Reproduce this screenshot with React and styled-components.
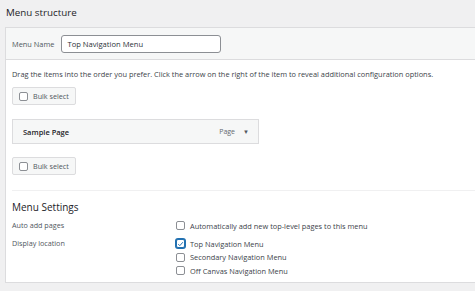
import React from 'react';
import styled, { createGlobalStyle } from 'styled-components';

const locations = [
  { label: 'Top Navigation Menu', checked: true },
  { label: 'Secondary Navigation Menu', checked: false },
  { label: 'Off Canvas Navigation Menu', checked: false },
];

const GlobalStyle = createGlobalStyle`
  html, body {
    margin: 0;
    padding: 0;
    background: #f0f0f1;
    overflow: hidden;
  }
  body {
    font-family: "Open Sans", "Noto Sans", sans-serif;
    color: #1d2327;
  }
`;

const Check = ({ checked }) => (
  <Box checked={checked}>
    {checked && (
      <svg width="8" height="8" viewBox="0 0 10 10">
        <path d="M1.8 5.2 L4 7.4 L8.4 2.4" fill="none" stroke="#2271b1" strokeWidth="1.4" />
      </svg>
    )}
  </Box>
);

const App = () => {
  return (
    <>
      <GlobalStyle />
      <Page>
        <Title>Menu structure</Title>
        <Panel>
          <Header>
            <Label>Menu Name</Label>
            <NameInput defaultValue="Top Navigation Menu" />
          </Header>
          <Body>
            <Hint>
              Drag the items into the order you prefer. Click the arrow on the right of the item to reveal additional configuration options.
            </Hint>
            <BulkButton>
              <Check />
              Bulk select
            </BulkButton>
            <MenuItem>
              <ItemTitle>Sample Page</ItemTitle>
              <ItemMeta>
                Page
                <Arrow>▼</Arrow>
              </ItemMeta>
            </MenuItem>
            <BulkButton>
              <Check />
              Bulk select
            </BulkButton>
            <Settings>
              <SettingsTitle>Menu Settings</SettingsTitle>
              <SettingRow>
                <SettingLabel>Auto add pages</SettingLabel>
                <Options>
                  <Option>
                    <Check />
                    Automatically add new top-level pages to this menu
                  </Option>
                </Options>
              </SettingRow>
              <SettingRow>
                <SettingLabel>Display location</SettingLabel>
                <Options>
                  {locations.map(loc => (
                    <Option key={loc.label}>
                      <Check checked={loc.checked} />
                      {loc.label}
                    </Option>
                  ))}
                </Options>
              </SettingRow>
            </Settings>
          </Body>
        </Panel>
      </Page>
    </>
  );
};

const Page = styled.div`
  width: 475px;
  height: 291px;
  overflow: hidden;
`

const Title = styled.h2`
  margin: 0;
  padding: 6px 0 0 6px;
  height: 21px;
  font-size: 9.8px;
  font-weight: 400;
  line-height: 14px;
  color: #1d2327;
`

const Panel = styled.div`
  margin-left: 5px;
  width: 490px;
  background: #fff;
  border: 1px solid #dcdcde;
  box-sizing: border-box;
`

const Header = styled.div`
  height: 31px;
  background: #f6f7f7;
  border-bottom: 1px solid #dcdcde;
  display: flex;
  align-items: center;
  padding: 0 6px;
  gap: 7px;
`

const Label = styled.span`
  font-size: 7.4px;
  color: #50575e;
`

const NameInput = styled.input`
  width: 160px;
  height: 18px;
  box-sizing: border-box;
  border: 1px solid #8c8f94;
  border-radius: 3px;
  padding: 0 5px;
  font-family: inherit;
  font-size: 7.6px;
  color: #2c3338;
  background: #fff;
`

const Body = styled.div`
  padding: 9px 6px 0;
  display: flex;
  flex-direction: column;
  align-items: flex-start;
`

const Hint = styled.p`
  margin: 0 0 8px;
  font-size: 7.4px;
  line-height: 10px;
  color: #3c434a;
  white-space: nowrap;
`

const BulkButton = styled.div`
  display: flex;
  align-items: center;
  gap: 5px;
  height: 18px;
  box-sizing: border-box;
  padding: 0 6px;
  background: #f6f7f7;
  border: 1px solid #dcdcde;
  border-radius: 2px;
  font-size: 7.2px;
  color: #50575e;
`

const Box = styled.span`
  width: 9px;
  height: 9px;
  box-sizing: border-box;
  border: 1px solid ${(props) => (props.checked ? '#2271b1' : '#8c8f94')};
  border-radius: 2px;
  background: #fff;
  display: flex;
  align-items: center;
  justify-content: center;
  flex-shrink: 0;
  box-shadow: ${(props) => (props.checked ? '0 0 0 1px #2271b1' : 'none')};
`

const MenuItem = styled.div`
  margin: 14px 0 13px;
  width: 247px;
  height: 25px;
  box-sizing: border-box;
  background: #f6f7f7;
  border: 1px solid #dcdcde;
  display: flex;
  align-items: center;
  justify-content: space-between;
  padding: 0 9px 0 10px;
`

const ItemTitle = styled.span`
  font-size: 7.5px;
  font-weight: 600;
  color: #1d2327;
`

const ItemMeta = styled.span`
  font-size: 7px;
  color: #646970;
  display: flex;
  align-items: center;
  gap: 8px;
`

const Arrow = styled.span`
  font-size: 6px;
  color: #50575e;
`

const Settings = styled.div`
  margin-top: 15px;
  align-self: stretch;
  border-top: 1px solid #f0f0f1;
  padding-top: 9px;
`

const SettingsTitle = styled.h3`
  margin: 0 0 5px;
  font-size: 10px;
  line-height: 14px;
  font-weight: 500;
  color: #1d2327;
`

const SettingRow = styled.div`
  display: flex;
  margin-bottom: 5px;
`

const SettingLabel = styled.span`
  width: 164px;
  font-size: 7.2px;
  line-height: 13px;
  color: #50575e;
`

const Options = styled.div`
  display: flex;
  flex-direction: column;
  gap: 0.5px;
`

const Option = styled.label`
  display: flex;
  align-items: center;
  gap: 5px;
  height: 13px;
  font-size: 7.4px;
  color: #3c434a;
`

export default App;
